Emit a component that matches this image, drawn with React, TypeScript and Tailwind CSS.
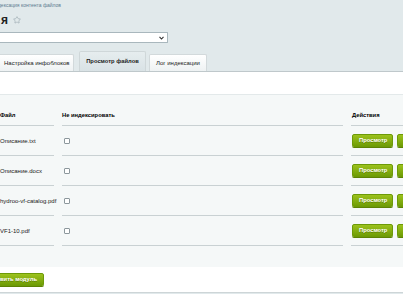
import { Star } from "lucide-react";

const files = ["Описание.txt", "Описание.docx", "hydroo-vf-catalog.pdf", "VF1-10.pdf"];

const GreenButton = ({ children, className = "" }: { children: React.ReactNode; className?: string }) => (
  <button
    className={`h-[13px] shrink-0 rounded-[2px] border border-[#6d9a08] bg-linear-to-b from-[#9cc21c] to-[#6f9d05] px-[6px] text-[5.8px] font-bold leading-none text-white shadow-[0_1px_0_#5d8304] [text-shadow:0_1px_0_rgba(0,0,0,0.25)] ${className}`}
  >
    {children}
  </button>
);

export default function App() {
  return (
    <div className="h-[294px] w-[403px] overflow-hidden bg-[#e1e9eb] font-['Liberation_Sans',Arial,sans-serif] text-black">
      {/* Breadcrumb */}
      <div className="h-[12px] pt-[2px]">
        <div className="flex w-[61px] justify-end">
          <span className="shrink-0 whitespace-nowrap text-[5px] leading-[6px] text-[#5d7c90]">
            Индексация контента файлов
          </span>
        </div>
      </div>

      {/* Title */}
      <div className="flex h-[16px] items-center">
        <span className="pl-[1px] text-[12px] font-bold leading-none text-[#222]">я</span>
        <Star className="ml-[5px] h-[8px] w-[8px] text-[#8d9ca4]" strokeWidth={1.6} />
      </div>

      {/* Select */}
      <div className="mt-[4px] flex h-[11px] w-[168px] items-center justify-end rounded-r-[1px] border border-l-0 border-[#a9b7bd] bg-white pr-[3px]">
        <svg width="5" height="4" viewBox="0 0 5 4">
          <path d="M0.5 0.8 L2.5 3 L4.5 0.8" fill="none" stroke="#333" strokeWidth="1.1" />
        </svg>
      </div>

      {/* Tabs */}
      <div className="mt-[8px] flex h-[21px] items-end border-b border-[#bfc8cb]">
        <div className="-ml-[4px] flex h-[17px] w-[78px] shrink-0 items-center whitespace-nowrap rounded-t-[2px] border border-b-0 border-[#d2d9db] bg-linear-to-b from-[#ffffff] to-[#eef2f3] pl-[7px] text-[6px] leading-none text-[#222]">
          Настройка инфоблоков
        </div>
        <div className="ml-[5px] flex h-[20px] w-[67px] shrink-0 items-center justify-center whitespace-nowrap rounded-t-[2px] border border-b-0 border-[#cfd7d9] bg-linear-to-b from-[#e6edef] to-[#d9e2e5] text-[5.8px] font-bold leading-none text-[#222]">
          Просмотр файлов
        </div>
        <div className="ml-[3px] flex h-[17px] w-[58px] shrink-0 items-center justify-center whitespace-nowrap rounded-t-[2px] border border-b-0 border-[#d2d9db] bg-linear-to-b from-[#ffffff] to-[#eef2f3] text-[6px] leading-none text-[#222]">
          Лог индексации
        </div>
      </div>

      {/* Content */}
      <div className="bg-white pt-[22px]">
        <div className="border-t border-[#e3e9ea] bg-[#f5f8f8] pb-[21px]">
          <div className="grid grid-cols-[54px_281px_1fr] gap-x-[8px] text-[6px] leading-[8px]">
            <div className="flex h-[31px] items-end border-b border-[#c9d1d3] pb-[6px] text-[5.8px] font-bold">Файл</div>
            <div className="flex h-[31px] items-end border-b border-[#c9d1d3] pb-[6px] text-[5.8px] font-bold">Не индексировать</div>
            <div className="flex h-[31px] items-end border-b border-[#c9d1d3] pb-[6px] pl-[1px] text-[5.8px] font-bold">Действия</div>

            {files.map((f) => (
              <div key={f} className="contents">
                <div className="flex h-[30px] items-center whitespace-nowrap border-b border-[#c9d1d3] text-[#222]">{f}</div>
                <div className="flex h-[30px] items-center border-b border-[#c9d1d3] pl-[2px]">
                  <span className="h-[6px] w-[6px] rounded-[1px] border border-[#8c979c] bg-white" />
                </div>
                <div className="flex h-[30px] items-center gap-[4px] border-b border-[#c9d1d3] pl-[1px]">
                  <GreenButton className="w-[41px] px-0">Просмотр</GreenButton>
                  <GreenButton className="w-[41px] px-0">Удалить</GreenButton>
                </div>
              </div>
            ))}
          </div>
        </div>

        {/* Footer */}
        <div className="flex h-[26px] items-center border-b border-[#cdd5d7]">
          <div className="flex w-[44px] justify-end">
            <GreenButton className="whitespace-nowrap px-[6px]">Установить модуль</GreenButton>
          </div>
        </div>
      </div>
    </div>
  );
}
